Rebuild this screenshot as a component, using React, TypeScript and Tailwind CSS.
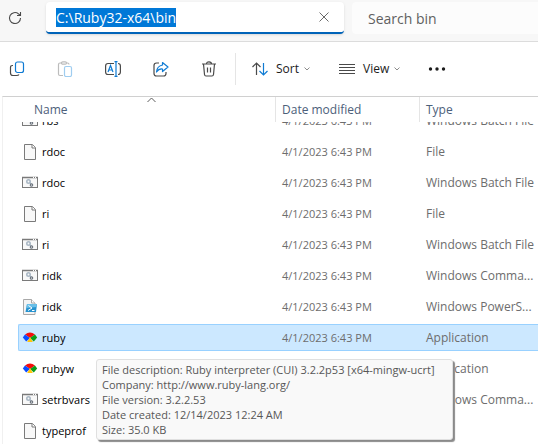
import { useEffect, useRef } from "react";

type IconKind = "file" | "batch" | "powershell" | "ruby";

interface Entry {
  name: string;
  type: string;
  icon: IconKind;
  selected?: boolean;
}

const entries: Entry[] = [
  { name: "rbs", type: "Windows Batch File", icon: "batch" },
  { name: "rdoc", type: "File", icon: "file" },
  { name: "rdoc", type: "Windows Batch File", icon: "batch" },
  { name: "ri", type: "File", icon: "file" },
  { name: "ri", type: "Windows Batch File", icon: "batch" },
  { name: "ridk", type: "Windows Comma...", icon: "batch" },
  { name: "ridk", type: "Windows PowerS...", icon: "powershell" },
  { name: "ruby", type: "Application", icon: "ruby", selected: true },
  { name: "rubyw", type: "Application", icon: "ruby" },
  { name: "setrbvars", type: "Windows Comma...", icon: "batch" },
  { name: "typeprof", type: "File", icon: "file" },
];

function EntryIcon({ kind }: { kind: IconKind }) {
  if (kind === "file") {
    return (
      <svg width="16" height="16" viewBox="0 0 16 16" aria-hidden="true">
        <path d="M2.5.5h8l3 3v12h-11z" fill="#f8f8f8" stroke="#7a7a7a" />
        <path d="M10 .5v3.500h3.500" fill="#fff" stroke="#7a7a7a" />
      </svg>
    );
  }
  if (kind === "batch") {
    return (
      <svg width="16" height="16" viewBox="0 0 16 16" aria-hidden="true">
        <rect x=".5" y="2.500" width="15" height="10" fill="#f8f8f8" stroke="#7a7a7a" />
        <path d="M0 2.500h16" stroke="#7a7a7a" strokeWidth="1.500" />
        <path d="M11 2.500h1M13 2.500h1" stroke="#fff" />
        <circle cx="6.500" cy="6.500" r="1.700" fill="none" stroke="#a9b7c4" strokeWidth="1.600" />
        <path d="M8 8l1.500 1" stroke="#a9b7c4" strokeWidth="1.500" />
        <circle cx="9.500" cy="10" r="1.200" fill="#fff" stroke="#6f7780" strokeWidth="1.200" />
      </svg>
    );
  }
  if (kind === "powershell") {
    return (
      <svg width="16" height="16" viewBox="0 0 16 16" aria-hidden="true">
        <path d="M1.500.5h8l3.500 3.500v11.500H1.500z" fill="#f3f3f3" stroke="#a8a8a8" />
        <path d="M9.500.5V4H13" fill="#fff" stroke="#a8a8a8" />
        <path d="M5 5h10l-1 8H3.500z" fill="#2793cf" />
        <path d="M4.500 9L5 5h10l-.5 3z" fill="#69bfe8" />
        <path d="M6.500 6.500L10 9l-4 2.500M10 11.500h2.500" fill="none" stroke="#fff" />
      </svg>
    );
  }
  return (
    <svg width="16" height="16" viewBox="0 0 16 16" aria-hidden="true">
      <path d="M3 4.500Q8 .5 13 4.500L8 8z" fill="#f50d0d" />
      <path d="M3 4.500L.8 7.500l3.400 4L8 8z" fill="#0a4dff" />
      <path d="M13 4.500l2.200 3-3.400 4L8 8z" fill="#0a9c1b" />
      <path d="M8 7l-2.800 5h5.600z" fill="#ffc40d" />
    </svg>
  );
}

const tool = "flex h-8 w-8 items-center justify-center";
const ink = "#4a4a4a";
const blue = "#0f7bd3";

function Chevron() {
  return (
    <svg className="-ml-1" width="8" height="6" viewBox="0 0 8 6" fill="none" stroke="#8c8c8c" aria-hidden="true">
      <path d="M1.500 1.500L4 4l2.500-2.500" />
    </svg>
  );
}

function Toolbar() {
  return (
    <div role="toolbar" aria-label="Commands" className="flex h-[54px] items-center bg-white">
      <div className="flex gap-4 pl-px">
        <button aria-label="Copy" className={tool}>
          <svg width="16" height="16" viewBox="0 0 16 16" fill="none" strokeWidth="1.200">
            <path d="M4 4.500H3.500Q1.500 4.500 1.500 6.500V12q0 2.500 2.500 2.500h3.500q2 0 2.500-1" stroke={ink} />
            <rect x="6.500" y="1" width="8" height="10.500" rx="2" stroke={blue} />
          </svg>
        </button>
        <button aria-label="Paste" disabled className={tool}>
          <svg width="16" height="16" viewBox="0 0 16 16" fill="none" strokeWidth="1.200">
            <path d="M6 14.500H3q-1.500 0-1.500-1.500V3.500Q1.500 2 3 2h7.500Q12 2 12 3.500" stroke="#bcbcbc" />
            <rect x="4.500" y=".8" width="5" height="2.400" rx="1.200" fill="#fff" stroke="#bcbcbc" />
            <rect x="7.500" y="5.500" width="7" height="10" rx="1.500" stroke="#9fcdf0" />
          </svg>
        </button>
        <button aria-label="Rename" className={tool}>
          <svg width="16" height="16" viewBox="0 0 16 16" fill="none" strokeWidth="1.200">
            <path d="M9 2.500H3Q.6 2.500.6 5v6Q.6 13.500 3 13.500h6M13 2.500q2.400 0 2.400 2.500v6q0 2.500-2.400 2.500" stroke={ink} />
            <path d="M3 11l2.500-6.500L8 11M4 9h3M9.500.6h3M9.500 15.400h3M11 .6v14.800" stroke={blue} />
          </svg>
        </button>
        <button aria-label="Share" className={tool}>
          <svg width="16" height="16" viewBox="0 0 16 16" fill="none" strokeWidth="1.200">
            <path d="M6 2H3.500Q1 2 1 4.500v8Q1 15 3.500 15h7q2.500 0 2.500-2.500V11" stroke={ink} />
            <path d="M9.500 1.500L15 6l-5.500 4.500V8Q6 7.500 3.500 11 4 5 9.500 4z" stroke={blue} strokeLinejoin="round" />
          </svg>
        </button>
        <button aria-label="Delete" className={tool}>
          <svg width="16" height="16" viewBox="0 0 16 16" fill="none" stroke={ink} strokeWidth="1.200">
            <path d="M1 3h14M5.500 3Q5.500.8 8 .8T10.500 3M2.500 3l1 10.500q.2 1.500 1.500 1.500h6q1.300 0 1.500-1.500l1-10.500M6.500 6.500v5M9.500 6.500v5" />
          </svg>
        </button>
      </div>
      <div className="ml-[10px] h-8 w-px bg-[#e5e5e5]" />
      <button className="ml-4 flex items-center gap-2 text-[#1b1b1b]">
        <svg width="16" height="16" viewBox="0 0 16 16" fill="none" strokeWidth="1.200" aria-hidden="true">
          <path d="M4.500 14V2M.5 6l4-4 4 4" stroke={ink} />
          <path d="M11.500 2v12M7.500 10l4 4 4-4" stroke={blue} />
        </svg>
        <span>Sort</span>
        <Chevron />
      </button>
      <button className="ml-7 flex items-center gap-2 text-[#1b1b1b]">
        <svg width="16" height="12" viewBox="0 0 16 12" stroke={ink} aria-hidden="true">
          <path d="M0 1.500h16M0 4.500h16M0 7.500h16M0 10.500h16" />
        </svg>
        <span>View</span>
        <Chevron />
      </button>
      <button aria-label="See more" className="ml-5 flex h-8 w-8 items-center justify-center">
        <svg width="18" height="4" viewBox="0 0 18 4" fill="#1b1b1b">
          <circle cx="2.500" cy="2" r="1.700" />
          <circle cx="9" cy="2" r="1.700" />
          <circle cx="15.500" cy="2" r="1.700" />
        </svg>
      </button>
    </div>
  );
}

export default function App() {
  const address = useRef<HTMLInputElement>(null);
  useEffect(() => {
    address.current?.focus();
    address.current?.select();
  }, []);

  return (
    <main className="relative min-h-screen overflow-hidden bg-white font-['Open_Sans','Noto_Sans',sans-serif] text-[12px] leading-4 text-[#6d6d6d]">
      <div className="flex h-[42px] items-start border-b border-[#dcdcdc] bg-[#f7f7f7] pt-[2px]">
        <button aria-label="Refresh" className="flex h-8 w-[30px] shrink-0 items-center justify-center">
          <svg width="14" height="14" viewBox="0 0 14 14" fill="none" stroke={ink} strokeWidth="1.100">
            <path d="M12.500 7A5.500 5.500 0 1 1 10.500 2.800L12.500 4.500M12.500 1v3.500H9" />
          </svg>
        </button>
        <div className="ml-4 flex h-8 w-[298px] items-center overflow-hidden rounded border-b-2 border-[#0063b8] bg-white pl-[10px] shadow-sm">
          <input
            ref={address}
            aria-label="Address"
            defaultValue="C:\Ruby32-x64\bin"
            className="h-[19px] min-w-0 flex-1 bg-transparent text-[14px] leading-[19px] text-[#1b1b1b] outline-none selection:bg-[#0078d7] selection:text-white"
          />
          <button aria-label="Clear" className="flex h-7 w-10 items-center justify-center">
            <svg width="10" height="10" viewBox="0 0 10 10" stroke="#6a6a6a">
              <path d="M.5.5l9 9M9.500.5l-9 9" />
            </svg>
          </button>
        </div>
        <input
          type="search"
          aria-label="Search"
          placeholder="Search bin"
          className="ml-2 h-8 min-w-0 flex-1 rounded-l bg-[#fcfcfc] pl-4 text-[14px] outline-none placeholder:text-[#606060]"
        />
      </div>

      <Toolbar />

      <section className="ml-[2px] overflow-hidden border-t border-l border-t-[#d0d0d0] border-l-[#f0f0f0]">
        <table className="block w-full">
          <thead className="relative z-10 block bg-white text-[#4c607a]">
            <tr className="grid h-[25px] grid-cols-[273px_144px_1fr] text-left">
              <th className="relative border-r border-[#e5e5e5] pt-[5px] pl-[31px] font-normal">
                Name
                <svg className="absolute top-0 left-[144px]" width="9" height="6" viewBox="0 0 9 6" fill="none" stroke="#5c5c5c" aria-hidden="true">
                  <path d="M.5 5l4-4 4 4" />
                </svg>
              </th>
              <th className="border-r border-[#e5e5e5] pt-[5px] pl-[6px] font-normal">Date modified</th>
              <th className="pt-[5px] pl-[6px] font-normal">Type</th>
            </tr>
          </thead>
          <tbody className="-mt-[15px] flex flex-col gap-1 pl-[15px]">
            {entries.map((entry, i) => (
              <tr
                key={i}
                className={`grid h-[27px] grid-cols-[258px_144px_1fr] items-center rounded-l-[2px] border-y border-l ${
                  entry.selected ? "border-[#99d1ff] bg-[#cce8ff]" : "border-transparent"
                }`}
              >
                <td className="flex items-center gap-1 pl-[3px] text-[11px] text-black">
                  <EntryIcon kind={entry.icon} />
                  {entry.name}
                </td>
                <td className="pl-[5px] text-[11px]">4/1/2023 6:43 PM</td>
                <td className="truncate pl-[5px]">{entry.type}</td>
              </tr>
            ))}
          </tbody>
        </table>
      </section>

      <div
        role="tooltip"
        className="absolute top-[359px] left-24 z-20 rounded-[3px] border border-[#e0e0e0] bg-[#f9f9f9] py-[2px] pr-[17px] pl-[5px] text-[11px] leading-[15px] whitespace-nowrap text-[#575757] shadow-[2px_2px_1px_#8a8a8a]"
      >
        <p>File description: Ruby interpreter (CUI) 3.2.2p53 [x64-mingw-ucrt]</p>
        <p>Company: http://www.ruby-lang.org/</p>
        <p>File version: 3.2.2.53</p>
        <p>Date created: 12/14/2023 12:24 AM</p>
        <p>Size: 35.0 KB</p>
      </div>
    </main>
  );
}
